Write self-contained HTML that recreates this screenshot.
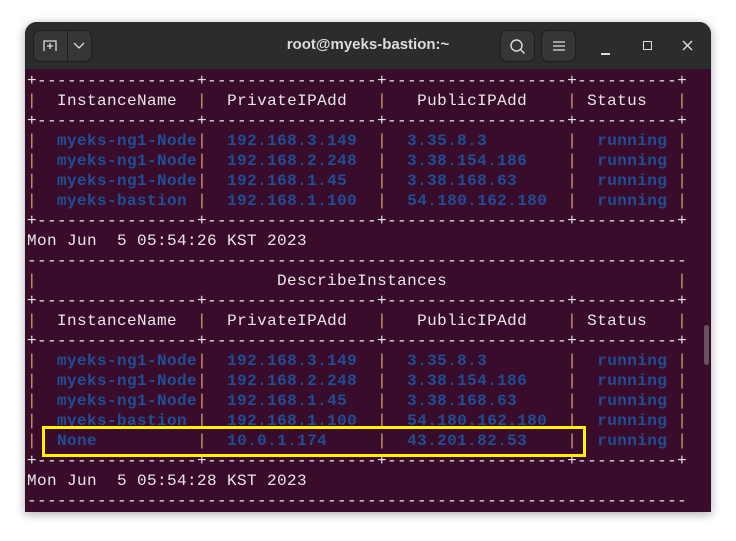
<!DOCTYPE html>
<html><head><meta charset="utf-8"><style>
*{margin:0;padding:0;box-sizing:border-box}
body{width:736px;height:541px;background:#fff;position:relative;overflow:hidden;font-family:"Liberation Sans",sans-serif}
.win{position:absolute;left:25px;top:22px;width:686px;height:490px;background:#380c2a;border-radius:12px 12px 0 0;box-shadow:0 2px 10px rgba(0,0,0,.35);overflow:hidden}
.tb{position:absolute;left:0;top:0;width:686px;height:47px;background:#2c2c2c}
.btn{position:absolute;top:8px;height:32px;border:1px solid #1e1e1e;background:#363636;border-radius:7px}
.title{position:absolute;left:0;width:686px;top:14px;text-align:center;color:#dcdcdc;font-size:15px;font-weight:bold}
pre{position:absolute;left:2px;top:49px;font-family:"Liberation Mono",monospace;font-size:16px;letter-spacing:.4px;line-height:20px;color:#e8e8e8}
.o{color:#d99a6e}.b{color:#1f4f96;font-weight:bold}
.hl{position:absolute;left:17px;top:404px;width:544px;height:31px;border:3px solid #fff200}
.sb{position:absolute;left:679px;top:303px;width:5px;height:40px;background:#6a5060;border-radius:3px}
</style></head><body>
<div class="win">
<div class="tb">
<div class="btn" style="left:8px;width:59px"></div>
<div style="position:absolute;left:42px;top:9px;width:1px;height:30px;background:#1e1e1e"></div>
<svg style="position:absolute;left:17px;top:16px" width="16" height="16"><path d="M2 13V3h12v10M8 5v6M5 8h6" stroke="#ddd" stroke-width="1.3" fill="none"/></svg>
<svg style="position:absolute;left:48px;top:18px" width="12" height="10"><path d="M1 3l5 5 5-5" stroke="#ddd" stroke-width="1.3" fill="none"/></svg>
<div class="title">root@myeks-bastion:~</div>
<div class="btn" style="left:475px;width:35px"></div>
<svg style="position:absolute;left:484px;top:16px" width="18" height="18"><circle cx="7.5" cy="7.5" r="5.5" stroke="#ddd" stroke-width="1.4" fill="none"/><path d="M11.5 11.5l4 4" stroke="#ddd" stroke-width="1.4"/></svg>
<div class="btn" style="left:516px;width:35px"></div>
<svg style="position:absolute;left:527px;top:17px" width="14" height="14"><path d="M1 3h12M1 7h12M1 11h12" stroke="#ddd" stroke-width="1.2"/></svg>
<div style="position:absolute;left:576px;top:31px;width:9px;height:1.5px;background:#ddd"></div>
<div style="position:absolute;left:618px;top:19px;width:9px;height:9px;border:1.4px solid #ddd"></div>
<svg style="position:absolute;left:657px;top:18px" width="11" height="11"><path d="M1 1l9 9M10 1l-9 9" stroke="#ddd" stroke-width="1.4"/></svg>
</div>
<pre>+----------------+-----------------+------------------+----------+
<span class="o">|</span>  InstanceName  <span class="o">|</span>  PrivateIPAdd   <span class="o">|</span>   PublicIPAdd    <span class="o">|</span> Status   <span class="o">|</span>
+----------------+-----------------+------------------+----------+
<span class="o">|</span>  <span class="b">myeks-ng1-Node</span><span class="o">|</span>  <span class="b">192.168.3.149</span>  <span class="o">|</span>  <span class="b">3.35.8.3</span>        <span class="o">|</span>  <span class="b">running</span> <span class="o">|</span>
<span class="o">|</span>  <span class="b">myeks-ng1-Node</span><span class="o">|</span>  <span class="b">192.168.2.248</span>  <span class="o">|</span>  <span class="b">3.38.154.186</span>    <span class="o">|</span>  <span class="b">running</span> <span class="o">|</span>
<span class="o">|</span>  <span class="b">myeks-ng1-Node</span><span class="o">|</span>  <span class="b">192.168.1.45</span>   <span class="o">|</span>  <span class="b">3.38.168.63</span>     <span class="o">|</span>  <span class="b">running</span> <span class="o">|</span>
<span class="o">|</span>  <span class="b">myeks-bastion</span> <span class="o">|</span>  <span class="b">192.168.1.100</span>  <span class="o">|</span>  <span class="b">54.180.162.180</span>  <span class="o">|</span>  <span class="b">running</span> <span class="o">|</span>
+----------------+-----------------+------------------+----------+
Mon Jun  5 05:54:26 KST 2023
------------------------------------------------------------------
<span class="o">|</span>                        DescribeInstances                       <span class="o">|</span>
+----------------+-----------------+------------------+----------+
<span class="o">|</span>  InstanceName  <span class="o">|</span>  PrivateIPAdd   <span class="o">|</span>   PublicIPAdd    <span class="o">|</span> Status   <span class="o">|</span>
+----------------+-----------------+------------------+----------+
<span class="o">|</span>  <span class="b">myeks-ng1-Node</span><span class="o">|</span>  <span class="b">192.168.3.149</span>  <span class="o">|</span>  <span class="b">3.35.8.3</span>        <span class="o">|</span>  <span class="b">running</span> <span class="o">|</span>
<span class="o">|</span>  <span class="b">myeks-ng1-Node</span><span class="o">|</span>  <span class="b">192.168.2.248</span>  <span class="o">|</span>  <span class="b">3.38.154.186</span>    <span class="o">|</span>  <span class="b">running</span> <span class="o">|</span>
<span class="o">|</span>  <span class="b">myeks-ng1-Node</span><span class="o">|</span>  <span class="b">192.168.1.45</span>   <span class="o">|</span>  <span class="b">3.38.168.63</span>     <span class="o">|</span>  <span class="b">running</span> <span class="o">|</span>
<span class="o">|</span>  <span class="b">myeks-bastion</span> <span class="o">|</span>  <span class="b">192.168.1.100</span>  <span class="o">|</span>  <span class="b">54.180.162.180</span>  <span class="o">|</span>  <span class="b">running</span> <span class="o">|</span>
<span class="o">|</span>  <span class="b">None</span>          <span class="o">|</span>  <span class="b">10.0.1.174</span>     <span class="o">|</span>  <span class="b">43.201.82.53</span>    <span class="o">|</span>  <span class="b">running</span> <span class="o">|</span>
+----------------+-----------------+------------------+----------+
Mon Jun  5 05:54:28 KST 2023
------------------------------------------------------------------</pre>
<div class="hl"></div>
<div class="sb"></div>
</div>
</body></html>
